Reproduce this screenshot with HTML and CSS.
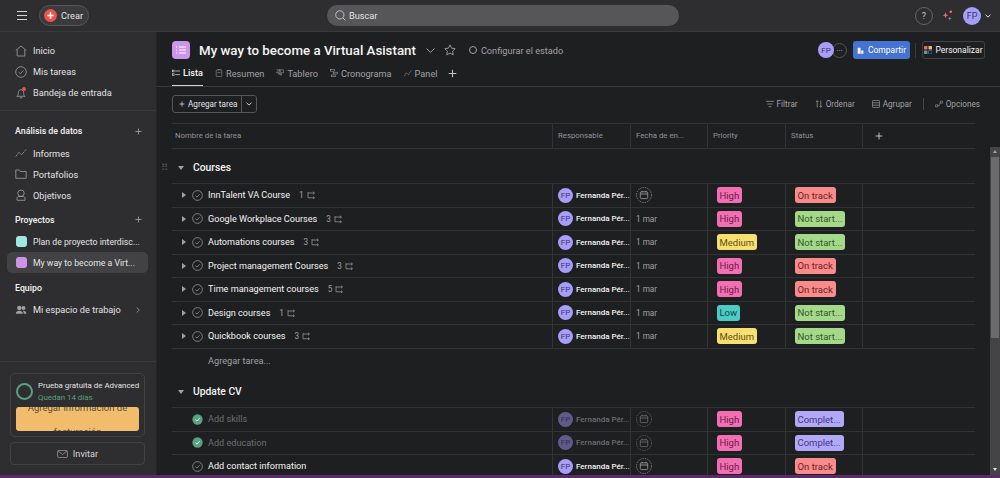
FILE: index.html
```html
<!DOCTYPE html>
<html>
<head>
  <title>My way to become a Virtual Asistant</title>
  <link rel="stylesheet" href="styles.css">
</head>
<body>
  <!-- shared icons -->
  <svg class="defs" width="0" height="0">
    <symbol id="i-check" viewBox="0 0 12 12"><circle cx="6" cy="6" r="5.3" fill="none" stroke="currentColor" stroke-width=".8"/><path d="M3.8 6.2l1.6 1.5 2.9-3.1" fill="none" stroke="currentColor" stroke-width=".8"/></symbol>
    <symbol id="i-done" viewBox="0 0 12 12"><circle cx="6" cy="6" r="5.6" fill="#58a182"/><path d="M3.8 6.2l1.6 1.5 2.9-3.1" fill="none" stroke="#fff" stroke-width="1"/></symbol>
    <symbol id="i-sub" viewBox="0 0 12 10"><path d="M1 1.5v7h8M1 2.5h8M7.2 .8l1.8 1.700-1.800 1.700M7.2 6.800l1.800 1.700-1.800 1.700" fill="none" stroke="currentColor" stroke-width=".9"/></symbol>
    <symbol id="i-cal" viewBox="0 0 16 16"><circle cx="8" cy="8" r="7.5" fill="none" stroke="currentColor" stroke-width=".7" stroke-dasharray="1.4 1"/><rect x="4.3" y="4.8" width="7.4" height="6.8" rx="1" fill="none" stroke="currentColor" stroke-width=".8"/><path d="M4.3 7h7.4M6 3.8v1.5M10 3.8v1.5" stroke="currentColor" stroke-width=".8"/></symbol>
    <symbol id="i-plus" viewBox="0 0 10 10"><path d="M5 .8v8.4M.8 5h8.4" stroke="currentColor" stroke-width="1.2"/></symbol>
  </svg>

  <header class="topbar">
    <svg class="menu-icon" viewBox="0 0 10 9"><path d="M0 .5h10M0 4.5h10M0 8.5h10" stroke="#d5d4d5" stroke-width="1"/></svg>
    <button class="create"><span class="create-dot"><svg viewBox="0 0 10 10"><path d="M5 1.5v7M1.5 5h7" stroke="#fff" stroke-width="1.8"/></svg></span>Crear</button>
    <div class="search">
      <svg viewBox="0 0 12 12"><circle cx="5.3" cy="5.3" r="4.5" fill="none" stroke="#d5d4d5" stroke-width=".9"/><path d="M8.6 8.6l2.8 2.8" stroke="#d5d4d5" stroke-width=".9"/></svg>
      Buscar
    </div>
    <div class="top-right">
      <span class="help">?</span>
      <svg class="sparkle" viewBox="0 0 11 11"><path d="M3.5 2.3l.8 2.2 2.2.8-2.2.8-.8 2.2-.8-2.2-2.2-.8 2.2-.8z" fill="#f06a6a"/><circle cx="8.8" cy="1.7" r="1.3" fill="#f06a6a"/><path d="M7.8 6.8l.5 1.3 1.3.5-1.3.5-.5 1.3-.5-1.3-1.3-.5 1.3-.5z" fill="#7a8ff0"/></svg>
      <span class="avatar avatar-top">FP</span>
      <svg class="top-chevron" viewBox="0 0 6 4"><path d="M.5.7l2.5 2.4 2.5-2.4" fill="none" stroke="#e3e2e3" stroke-width="1"/></svg>
    </div>
  </header>

  <div class="app">
    <aside class="sidebar">
      <nav class="nav-group nav-main">
        <a class="nav-item"><svg viewBox="0 0 12 12"><path d="M.8 5.4L6 1l5.200 4.400M2.200 4.500v6.500h7.600V4.500" fill="none" stroke="currentColor" stroke-width=".8"/></svg>Inicio</a>
        <a class="nav-item"><svg><use href="#i-check"/></svg>Mis tareas</a>
        <a class="nav-item"><svg viewBox="0 0 12 12"><path d="M1.5 9.3h9M2.5 9.3c.8-1 .8-2.200.8-3.500 0-1.800 1.100-3.200 2.700-3.200s2.700 1.400 2.700 3.200c0 1.300 0 2.500.8 3.500M4.800 10.800h2.400" fill="none" stroke="currentColor" stroke-width=".8"/><circle cx="9" cy="2" r="1.9" fill="#f0524c"/></svg>Bandeja de entrada</a>
      </nav>

      <div class="nav-title">Análisis de datos<svg><use href="#i-plus"/></svg></div>
      <nav class="nav-group">
        <a class="nav-item"><svg viewBox="0 0 12 12"><path d="M.8 9.5L4 5.2l2.500 2.600L11 2.500" fill="none" stroke="currentColor" stroke-width=".8" stroke-dasharray="2.6 .8"/></svg>Informes</a>
        <a class="nav-item"><svg viewBox="0 0 12 12"><path d="M.8 2h3.500l1 1.500h5.900v6.800H.8z" fill="none" stroke="currentColor" stroke-width=".8"/></svg>Portafolios</a>
        <a class="nav-item"><svg viewBox="0 0 12 12"><circle cx="6" cy="4.2" r="3.2" fill="none" stroke="currentColor" stroke-width=".8"/><path d="M2 11.3V9.500c0-1.200.8-2 2-2h4c1.200 0 2 .8 2 2v1.800z" fill="none" stroke="currentColor" stroke-width=".8"/></svg>Objetivos</a>
      </nav>

      <div class="nav-title">Proyectos<svg><use href="#i-plus"/></svg></div>
      <nav class="nav-group">
        <a class="nav-item"><span class="swatch swatch-teal"></span><span class="nav-text">Plan de proyecto interdisc...</span></a>
        <a class="nav-item nav-active"><span class="swatch swatch-purple"></span><span class="nav-text">My way to become a Virt...</span></a>
      </nav>

      <div class="nav-title nav-title-team">Equipo</div>
      <nav class="nav-group">
        <a class="nav-item"><svg viewBox="0 0 12 12"><circle cx="4.3" cy="4" r="2.2" fill="currentColor"/><circle cx="8.5" cy="4" r="2" fill="currentColor"/><path d="M.8 9.8c0-2 1.500-3 3.500-3s3.500 1 3.500 3zM8.700 9.800c0-1.300-.4-2.200-1-3 1.900-.3 3.700.7 3.700 3z" fill="currentColor"/></svg>Mi espacio de trabajo<svg class="nav-chevron" viewBox="0 0 4 6"><path d="M.7.5L3.3 3 .7 5.5" fill="none" stroke="currentColor" stroke-width=".8"/></svg></a>
      </nav>

      <div class="sidebar-bottom">
        <div class="trial">
          <div class="trial-head">
            <span class="trial-ring"></span>
            <div>
              <div class="trial-name">Prueba gratuita de Advanced</div>
              <div class="trial-days">Quedan 14 días</div>
            </div>
          </div>
          <div class="trial-cta"><span>Agregar información de</span><span>facturación</span></div>
        </div>
        <button class="invite"><svg viewBox="0 0 12 9"><rect x=".5" y=".5" width="11" height="8" rx="1.2" fill="none" stroke="currentColor" stroke-width=".8"/><path d="M.8 1l5.200 4 5.200-4" fill="none" stroke="currentColor" stroke-width=".8"/></svg>Invitar</button>
      </div>
    </aside>

    <main class="main">
      <div class="project-head">
        <div class="title-row">
          <span class="project-icon"><svg viewBox="0 0 10 8"><path d="M3 1h7M3 4h7M3 7h7M0 1h1.200M0 4h1.200M0 7h1.200" stroke="#fff" stroke-width="1"/></svg></span>
          <h1>My way to become a Virtual Asistant</h1>
          <svg class="title-chevron" viewBox="0 0 9 5"><path d="M.5.5L4.5 4.3 8.5.5" fill="none" stroke="#a2a0a2" stroke-width="1"/></svg>
          <svg class="title-star" viewBox="0 0 12 12"><path d="M6 .9l1.600 3.300 3.600.5-2.600 2.500.6 3.600L6 9.100l-3.200 1.700.6-3.600L.8 4.700l3.600-.5z" fill="none" stroke="#a2a0a2" stroke-width=".9"/></svg>
          <span class="status-link"><span class="status-ring"></span>Configurar el estado</span>
          <div class="head-actions">
            <span class="avatar avatar-head">FP</span>
            <span class="more-dots">···</span>
            <button class="share"><svg viewBox="0 0 10 10"><path d="M1 9.5V1h4v8.500zM6 9.500V5h3v4.500z" fill="#fff"/></svg>Compartir</button>
            <span class="head-divider"></span>
            <button class="customize"><svg viewBox="0 0 10 10"><rect width="4.3" height="4.3" rx=".6" fill="#f06a6a"/><rect x="5.7" width="4.3" height="4.3" rx=".6" fill="#f1bd6c"/><rect y="5.7" width="4.3" height="4.3" rx=".6" fill="#5da283"/><rect x="5.7" y="5.7" width="4.3" height="4.3" rx=".6" fill="none" stroke="#4573d2"/></svg>Personalizar</button>
          </div>
        </div>
        <div class="tabs">
          <a class="tab tab-active"><svg viewBox="0 0 10 8"><rect x=".4" y=".4" width="2.2" height="2.2" fill="none" stroke="currentColor" stroke-width=".7"/><rect x=".4" y="5" width="2.2" height="2.2" fill="none" stroke="currentColor" stroke-width=".7"/><path d="M4 1.5h6M4 6h6" stroke="currentColor" stroke-width=".8"/></svg>Lista</a>
          <a class="tab"><svg viewBox="0 0 8 10"><rect x=".5" y="1.2" width="7" height="8.3" rx="1" fill="none" stroke="currentColor" stroke-width=".7"/><path d="M2.5 1.2V.4h3v.8M2 4.5h4" stroke="currentColor" stroke-width=".7" fill="none"/></svg>Resumen</a>
          <a class="tab"><svg viewBox="0 0 10 9"><path d="M.5.5h9V4H6.800v3h-1.600V.5M4.800.5V6H3.200V4H.5z" fill="none" stroke="currentColor" stroke-width=".7"/></svg>Tablero</a>
          <a class="tab"><svg viewBox="0 0 10 10"><rect x=".5" y=".5" width="5" height="2.2" fill="none" stroke="currentColor" stroke-width=".7"/><rect x="4" y="4" width="5.5" height="2.2" fill="none" stroke="currentColor" stroke-width=".7"/><rect x="2" y="7.5" width="5" height="2.2" fill="none" stroke="currentColor" stroke-width=".7"/></svg>Cronograma</a>
          <a class="tab"><svg viewBox="0 0 10 10"><path d="M.5 9L3 4.5 5.5 7l4-6" fill="none" stroke="currentColor" stroke-width=".8" stroke-dasharray="2 .6"/></svg>Panel</a>
          <svg class="tab-add"><use href="#i-plus"/></svg>
        </div>
      </div>

      <div class="body-wrap">
        <div class="content">
          <div class="toolbar">
            <div class="add-task">
              <span class="add-task-main"><svg><use href="#i-plus"/></svg>Agregar tarea</span>
              <span class="add-task-more"><svg viewBox="0 0 6 4"><path d="M.5.7l2.500 2.400 2.500-2.400" fill="none" stroke="currentColor" stroke-width=".9"/></svg></span>
            </div>
            <div class="tools">
              <span class="tool"><svg viewBox="0 0 9 7"><path d="M0 .5h9M1.500 3.500h6M3 6.500h3" stroke="currentColor" stroke-width=".8"/></svg>Filtrar</span>
              <span class="tool"><svg viewBox="0 0 8 9"><path d="M2 8.5V.8M.5 2.3L2 .8l1.500 1.500M6 .5v7.700M4.500 6.700L6 8.200l1.500-1.500" fill="none" stroke="currentColor" stroke-width=".8"/></svg>Ordenar</span>
              <span class="tool"><svg viewBox="0 0 8 8"><rect x=".4" y=".4" width="7.2" height="7.2" rx="1" fill="none" stroke="currentColor" stroke-width=".7"/><path d="M.4 2.8h7.200M.4 5.200h7.200" stroke="currentColor" stroke-width=".7"/></svg>Agrupar</span>
              <span class="tool-divider"></span>
              <span class="tool"><svg viewBox="0 0 10 8"><path d="M.5 7.5V5h3v2.500zM6.500 3V.5h3V3zM3.500 6H5c1 0 1-4 2-4" fill="none" stroke="currentColor" stroke-width=".7"/></svg>Opciones</span>
            </div>
          </div>

          <div class="table">
            <div class="row row-head">
              <div class="cell cell-task">Nombre de la tarea</div>
              <div class="cell">Responsable</div>
              <div class="cell">Fecha de en...</div>
              <div class="cell">Priority</div>
              <div class="cell">Status</div>
              <div class="cell cell-plain"><svg class="col-add"><use href="#i-plus"/></svg></div>
            </div>

            <div class="section">
              <span class="drag">⠿</span><span class="caret-down"></span>Courses
            </div>

            <div class="row">
              <div class="cell cell-task"><span class="caret"></span><svg class="check"><use href="#i-check"/></svg><span class="task-name">InnTalent VA Course</span><span class="subs">1<svg><use href="#i-sub"/></svg></span></div>
              <div class="cell"><span class="avatar">FP</span><span class="person">Fernanda Pér...</span></div>
              <div class="cell"><svg class="cal"><use href="#i-cal"/></svg></div>
              <div class="cell cell-pill"><span class="pill pill-high">High</span></div>
              <div class="cell cell-pill"><span class="pill pill-track">On track</span></div>
              <div class="cell cell-plain"></div>
            </div>
            <div class="row">
              <div class="cell cell-task"><span class="caret"></span><svg class="check"><use href="#i-check"/></svg><span class="task-name">Google Workplace Courses</span><span class="subs">3<svg><use href="#i-sub"/></svg></span></div>
              <div class="cell"><span class="avatar">FP</span><span class="person">Fernanda Pér...</span></div>
              <div class="cell"><span class="date">1 mar</span></div>
              <div class="cell cell-pill"><span class="pill pill-high">High</span></div>
              <div class="cell cell-pill"><span class="pill pill-not">Not start...</span></div>
              <div class="cell cell-plain"></div>
            </div>
            <div class="row">
              <div class="cell cell-task"><span class="caret"></span><svg class="check"><use href="#i-check"/></svg><span class="task-name">Automations courses</span><span class="subs">3<svg><use href="#i-sub"/></svg></span></div>
              <div class="cell"><span class="avatar">FP</span><span class="person">Fernanda Pér...</span></div>
              <div class="cell"><span class="date">1 mar</span></div>
              <div class="cell cell-pill"><span class="pill pill-medium">Medium</span></div>
              <div class="cell cell-pill"><span class="pill pill-not">Not start...</span></div>
              <div class="cell cell-plain"></div>
            </div>
            <div class="row">
              <div class="cell cell-task"><span class="caret"></span><svg class="check"><use href="#i-check"/></svg><span class="task-name">Project management Courses</span><span class="subs">3<svg><use href="#i-sub"/></svg></span></div>
              <div class="cell"><span class="avatar">FP</span><span class="person">Fernanda Pér...</span></div>
              <div class="cell"><span class="date">1 mar</span></div>
              <div class="cell cell-pill"><span class="pill pill-high">High</span></div>
              <div class="cell cell-pill"><span class="pill pill-track">On track</span></div>
              <div class="cell cell-plain"></div>
            </div>
            <div class="row">
              <div class="cell cell-task"><span class="caret"></span><svg class="check"><use href="#i-check"/></svg><span class="task-name">Time management courses</span><span class="subs">5<svg><use href="#i-sub"/></svg></span></div>
              <div class="cell"><span class="avatar">FP</span><span class="person">Fernanda Pér...</span></div>
              <div class="cell"><span class="date">1 mar</span></div>
              <div class="cell cell-pill"><span class="pill pill-high">High</span></div>
              <div class="cell cell-pill"><span class="pill pill-track">On track</span></div>
              <div class="cell cell-plain"></div>
            </div>
            <div class="row">
              <div class="cell cell-task"><span class="caret"></span><svg class="check"><use href="#i-check"/></svg><span class="task-name">Design courses</span><span class="subs">1<svg><use href="#i-sub"/></svg></span></div>
              <div class="cell"><span class="avatar">FP</span><span class="person">Fernanda Pér...</span></div>
              <div class="cell"><span class="date">1 mar</span></div>
              <div class="cell cell-pill"><span class="pill pill-low">Low</span></div>
              <div class="cell cell-pill"><span class="pill pill-not">Not start...</span></div>
              <div class="cell cell-plain"></div>
            </div>
            <div class="row">
              <div class="cell cell-task"><span class="caret"></span><svg class="check"><use href="#i-check"/></svg><span class="task-name">Quickbook courses</span><span class="subs">3<svg><use href="#i-sub"/></svg></span></div>
              <div class="cell"><span class="avatar">FP</span><span class="person">Fernanda Pér...</span></div>
              <div class="cell"><span class="date">1 mar</span></div>
              <div class="cell cell-pill"><span class="pill pill-medium">Medium</span></div>
              <div class="cell cell-pill"><span class="pill pill-not">Not start...</span></div>
              <div class="cell cell-plain"></div>
            </div>

            <div class="add-row">Agregar tarea...</div>

            <div class="section">
              <span class="caret-down"></span>Update CV
            </div>

            <div class="row row-done">
              <div class="cell cell-task cell-leaf"><svg class="check"><use href="#i-done"/></svg><span class="task-name">Add skills</span></div>
              <div class="cell"><span class="avatar">FP</span><span class="person">Fernanda Pér...</span></div>
              <div class="cell"><svg class="cal"><use href="#i-cal"/></svg></div>
              <div class="cell cell-pill"><span class="pill pill-high">High</span></div>
              <div class="cell cell-pill"><span class="pill pill-complete">Complet...</span></div>
              <div class="cell cell-plain"></div>
            </div>
            <div class="row row-done">
              <div class="cell cell-task cell-leaf"><svg class="check"><use href="#i-done"/></svg><span class="task-name">Add education</span></div>
              <div class="cell"><span class="avatar">FP</span><span class="person">Fernanda Pér...</span></div>
              <div class="cell"><svg class="cal"><use href="#i-cal"/></svg></div>
              <div class="cell cell-pill"><span class="pill pill-high">High</span></div>
              <div class="cell cell-pill"><span class="pill pill-complete">Complet...</span></div>
              <div class="cell cell-plain"></div>
            </div>
            <div class="row">
              <div class="cell cell-task cell-leaf"><svg class="check"><use href="#i-check"/></svg><span class="task-name">Add contact information</span></div>
              <div class="cell"><span class="avatar">FP</span><span class="person">Fernanda Pér...</span></div>
              <div class="cell"><svg class="cal"><use href="#i-cal"/></svg></div>
              <div class="cell cell-pill"><span class="pill pill-high">High</span></div>
              <div class="cell cell-pill"><span class="pill pill-track">On track</span></div>
              <div class="cell cell-plain"></div>
            </div>
          </div>
        </div>

        <div class="scrollbar">
          <span class="scroll-up"></span>
          <span class="scroll-thumb"></span>
          <span class="scroll-down"></span>
        </div>
      </div>
    </main>
  </div>

  <div class="taskbar"></div>
</body>
</html>
```

FILE: styles.css
```css
* {
  box-sizing: border-box;
}
html, body {
  height: 100%;
}
body {
  margin: 0;
  display: flex;
  flex-direction: column;
  overflow: hidden;
  background: #1e1f21;
  color: #f5f4f3;
  font-family: Roboto, "Noto Sans", sans-serif;
  font-size: 9.2px;
}
button {
  font-family: inherit;
  cursor: pointer;
}
svg {
  display: block;
  flex-shrink: 0;
}
.defs {
  position: absolute;
}

/* top bar */
.topbar {
  height: 32px;
  flex-shrink: 0;
  display: flex;
  align-items: center;
  padding: 0 9px 0 17px;
  background: #2e2e30;
  border-bottom: 1px solid #3a3a3c;
}
.menu-icon {
  width: 10px;
  height: 9px;
}
.create {
  margin-left: 12px;
  width: 50px;
  height: 21px;
  display: flex;
  align-items: center;
  gap: 4px;
  padding: 0 0 0 4px;
  border: 1px solid #565557;
  border-radius: 11px;
  background: #3b3b3d;
  color: #e3e2e3;
  font-size: 9.2px;
}
.create-dot {
  width: 13px;
  height: 13px;
  padding: 2px;
  border-radius: 50%;
  background: #f0524c;
}
.search {
  margin-left: 238px;
  width: 352px;
  height: 21px;
  display: flex;
  align-items: center;
  gap: 3px;
  padding-left: 8px;
  border-radius: 11px;
  background: #565557;
  color: #e3e2e3;
}
.search svg {
  width: 11px;
  height: 11px;
}
.top-right {
  margin-left: auto;
  display: flex;
  align-items: center;
}
.help {
  width: 18px;
  height: 18px;
  display: flex;
  align-items: center;
  justify-content: center;
  border: 1px solid #656466;
  border-radius: 50%;
  color: #c4c3c4;
  font-size: 9px;
}
.sparkle {
  margin-left: 9px;
  width: 11px;
  height: 11px;
}
.top-chevron {
  margin-left: 4px;
  width: 6px;
  height: 4px;
}

/* avatars */
.avatar {
  width: 15px;
  height: 15px;
  flex-shrink: 0;
  display: flex;
  align-items: center;
  justify-content: center;
  border-radius: 50%;
  background: #a79dfb;
  color: #3b3566;
  font-size: 8px;
}
.avatar-top {
  margin-left: 10px;
  width: 18px;
  height: 18px;
  font-size: 9px;
}
.avatar-head {
  position: relative;
  z-index: 1;
  width: 16px;
  height: 16px;
}

/* sidebar */
.app {
  flex: 1;
  min-height: 0;
  display: flex;
}
.sidebar {
  width: 157px;
  flex-shrink: 0;
  display: flex;
  flex-direction: column;
  padding-top: 8px;
  background: #2e2e30;
  border-right: 1px solid #252527;
}
.nav-group {
  padding: 0 8px 0 7px;
}
.nav-main {
  padding-bottom: 7px;
  margin-bottom: 6px;
  border-bottom: 1px solid #39393b;
}
.nav-item {
  height: 21px;
  display: flex;
  align-items: center;
  gap: 6px;
  padding: 0 3px 0 8px;
  border-radius: 5px;
  color: #e3e2e3;
  white-space: nowrap;
}
.nav-item > svg {
  width: 12px;
  height: 12px;
  color: #a2a0a2;
}
.nav-item .nav-chevron {
  width: 4px;
  height: 6px;
  margin: 0 5px 0 auto;
}
.nav-text {
  font-size: 8.7px;
}
.nav-active {
  background: #424244;
}
.nav-title {
  height: 21px;
  margin: 3.5px 0 1px;
  display: flex;
  align-items: center;
  justify-content: space-between;
  padding: 0 14px 0 15px;
  color: #f5f4f3;
  font-size: 8.8px;
  font-weight: 500;
}
.nav-title svg {
  width: 7px;
  height: 7px;
  color: #a2a0a2;
}
.nav-title-team {
  margin-top: 4px;
}
.swatch {
  width: 11px;
  height: 11px;
  margin-left: 1px;
  flex-shrink: 0;
  border-radius: 3px;
}
.swatch-teal {
  background: #9ee7e3;
}
.swatch-purple {
  background: #cd95ea;
}
.sidebar-bottom {
  margin-top: auto;
  padding: 11px 11px 10px 10px;
  border-top: 1px solid #39393b;
}
.trial {
  height: 64px;
  padding: 6px 5px 0;
  border: 1px solid #424244;
  border-radius: 5px;
}
.trial-head {
  display: flex;
  gap: 5px;
  height: 27px;
}
.trial-ring {
  width: 17px;
  height: 17px;
  margin-top: 3px;
  flex-shrink: 0;
  border: 2.5px solid #58a182;
  border-radius: 50%;
}
.trial-name {
  color: #e3e2e3;
  font-size: 7.9px;
  line-height: 12px;
  white-space: nowrap;
}
.trial-days {
  color: #58a182;
  font-size: 7.9px;
  line-height: 12px;
}
.trial-cta {
  height: 24px;
  overflow: hidden;
  padding: 0 4px;
  border-radius: 3px;
  background: #f1bd6c;
  color: #5a4f3a;
  font-size: 9.5px;
  line-height: 24px;
  text-align: center;
}
.trial-cta span {
  display: block;
  margin-top: -11px;
}
.trial-cta span + span {
  margin-top: 0;
}
.invite {
  margin-top: 5px;
  width: 100%;
  height: 23px;
  display: flex;
  align-items: center;
  justify-content: center;
  gap: 5px;
  border: 1px solid #424244;
  border-radius: 4px;
  background: transparent;
  color: #d5d4d5;
  font-size: 9.2px;
}
.invite svg {
  width: 11px;
  height: 8px;
  color: #a2a0a2;
}

/* project header */
.main {
  flex: 1;
  min-width: 0;
  display: flex;
  flex-direction: column;
}
.project-head {
  height: 55px;
  flex-shrink: 0;
  padding: 0 15px;
  border-bottom: 1px solid #39393b;
}
.title-row {
  height: 34px;
  padding-top: 2px;
  display: flex;
  align-items: center;
}
.project-icon {
  width: 18px;
  height: 18px;
  padding: 5px 4px;
  border-radius: 4px;
  background: #cd95ea;
}
h1 {
  margin: 0 0 0 9px;
  color: #f5f4f3;
  font-size: 13.3px;
  font-weight: 500;
  white-space: nowrap;
}
.title-chevron {
  margin-left: 10px;
  width: 9px;
  height: 5px;
}
.title-star {
  margin-left: 9px;
  width: 12px;
  height: 12px;
}
.status-link {
  margin-left: 13px;
  display: flex;
  align-items: center;
  gap: 4px;
  color: #a2a0a2;
}
.status-ring {
  width: 8px;
  height: 8px;
  border: 1px solid #a2a0a2;
  border-radius: 50%;
}
.head-actions {
  margin-left: auto;
  display: flex;
  align-items: center;
}
.more-dots {
  width: 15px;
  height: 15px;
  margin-left: -2px;
  display: flex;
  align-items: center;
  justify-content: center;
  border: 1px solid #565557;
  border-radius: 50%;
  color: #c4c3c4;
  font-size: 8px;
}
.share {
  margin-left: 6px;
  width: 57px;
  height: 18px;
  display: flex;
  align-items: center;
  justify-content: center;
  gap: 4px;
  padding: 0;
  border: none;
  border-radius: 3px;
  background: #4573d2;
  color: #fff;
  font-size: 8.5px;
}
.share svg {
  width: 7px;
  height: 7px;
}
.head-divider {
  margin: 0 6px 0 5px;
  width: 1px;
  height: 15px;
  background: #39393b;
}
.customize {
  width: 63px;
  height: 18px;
  display: flex;
  align-items: center;
  justify-content: center;
  gap: 3px;
  padding: 0;
  border: 1px solid #424244;
  border-radius: 3px;
  background: transparent;
  color: #f5f4f3;
  font-size: 8.5px;
}
.customize svg {
  width: 8px;
  height: 8px;
}
.tabs {
  display: flex;
  align-items: flex-start;
  gap: 12px;
}
.tab {
  height: 20px;
  display: flex;
  align-items: center;
  gap: 3px;
  padding-bottom: 6px;
  color: #a2a0a2;
}
.tab svg {
  width: 8px;
  height: 8px;
}
.tab-active {
  color: #f5f4f3;
  font-weight: 500;
  border-bottom: 1px solid #d5d4d5;
}
.tab-add {
  margin: 3px 0 0 -2px;
  width: 9px;
  height: 9px;
  color: #c4c3c4;
}

/* list */
.body-wrap {
  flex: 1;
  min-height: 0;
  display: flex;
}
.content {
  flex: 1;
  min-width: 0;
  overflow: hidden;
}
.toolbar {
  height: 36px;
  display: flex;
  align-items: center;
  justify-content: space-between;
  padding: 0 10px 2px 15px;
}
.add-task {
  height: 18px;
  display: flex;
  border: 1px solid #565557;
  border-radius: 3px;
  color: #e3e2e3;
  font-size: 8.2px;
  white-space: nowrap;
}
.add-task-main {
  width: 69px;
  display: flex;
  align-items: center;
  gap: 3px;
  padding-left: 6px;
  border-right: 1px solid #565557;
}
.add-task-main svg {
  width: 6px;
  height: 6px;
}
.add-task-more {
  width: 14px;
  display: flex;
  align-items: center;
  justify-content: center;
}
.add-task-more svg {
  width: 6px;
  height: 4px;
}
.tools {
  display: flex;
  align-items: center;
  gap: 17px;
  color: #a2a0a2;
  font-size: 8.2px;
}
.tool {
  display: flex;
  align-items: center;
  gap: 3px;
}
.tool svg {
  width: 8px;
  height: 8px;
}
.tool-divider {
  margin: 0 -6px;
  width: 1px;
  height: 12px;
  background: #424244;
}
.table {
  margin-left: 15px;
  width: 803px;
  border-top: 1px solid #333335;
}
.row {
  height: 23.5px;
  display: grid;
  grid-template-columns: 381px 78px 77px 78px 77px 112px;
  border-bottom: 1px solid #333335;
  font-size: 9.1px;
}
.row-head {
  height: 24.5px;
  color: #949395;
  font-size: 7.8px;
}
.cell {
  display: flex;
  align-items: center;
  min-width: 0;
  padding-left: 5px;
  border-right: 1px solid #333335;
}
.cell-task {
  padding-left: 3px;
}
.cell-leaf {
  padding-left: 20px;
}
.cell-pill {
  padding-left: 8.5px;
}
.cell-plain {
  border-right: none;
}
.col-add {
  margin-left: 7px;
  width: 8px;
  height: 8px;
  color: #c4c3c4;
}
.section {
  height: 35.5px;
  display: flex;
  align-items: center;
  position: relative;
  padding: 4px 0 0 6px;
  border-bottom: 1px solid #333335;
  color: #f5f4f3;
  font-size: 10.3px;
  font-weight: 500;
}
.drag {
  position: absolute;
  left: -11px;
  color: #565557;
  font-size: 10px;
  font-weight: 400;
}
.caret-down {
  margin-right: 9px;
  width: 0;
  height: 0;
  border-left: 3.5px solid transparent;
  border-right: 3.5px solid transparent;
  border-top: 4px solid #a2a0a2;
}
.caret {
  margin: 0 6px 0 7px;
  width: 0;
  height: 0;
  border-top: 3.5px solid transparent;
  border-bottom: 3.5px solid transparent;
  border-left: 4px solid #a2a0a2;
}
.check {
  width: 11px;
  height: 11px;
  color: #a2a0a2;
}
.task-name {
  margin-left: 5px;
  color: #f5f4f3;
  white-space: nowrap;
}
.subs {
  margin-left: 9px;
  display: flex;
  align-items: center;
  gap: 3px;
  color: #a2a0a2;
  font-size: 8.2px;
}
.subs svg {
  width: 10px;
  height: 8px;
}
.person {
  margin-left: 3px;
  color: #f5f4f3;
  font-size: 8px;
  font-weight: 500;
  white-space: nowrap;
}
.cal {
  width: 16px;
  height: 16px;
  color: #a2a0a2;
}
.date {
  color: #a2a0a2;
  font-size: 8.2px;
}
.pill {
  height: 16px;
  display: inline-flex;
  align-items: center;
  padding: 0 3px;
  border-radius: 3px;
  font-size: 9.5px;
  white-space: nowrap;
}
.pill-high {
  background: #f26fb2;
  color: #6d1a4b;
}
.pill-medium {
  background: #f8df72;
  color: #5c4f14;
}
.pill-low {
  background: #4ecbc4;
  color: #0d4a47;
}
.pill-track {
  background: #f98b8b;
  color: #6f2127;
}
.pill-not {
  background: #a5d98a;
  color: #35562a;
}
.pill-complete {
  background: #b3a7f8;
  color: #3f3784;
}
.row-done .task-name,
.row-done .person,
.row-done .cal {
  color: #6d6e6f;
}
.row-done .avatar {
  background: #5f5a8a;
  color: #322e4e;
}
.add-row {
  height: 24px;
  display: flex;
  align-items: center;
  padding-left: 36px;
  color: #a2a0a2;
}

/* scrollbar */
.scrollbar {
  width: 10px;
  margin-top: 60px;
  flex-shrink: 0;
  display: flex;
  flex-direction: column;
  background: #444446;
}
.scroll-up,
.scroll-down {
  height: 10px;
  flex-shrink: 0;
  position: relative;
}
.scroll-up::after,
.scroll-down::after {
  content: "";
  position: absolute;
  left: 2.5px;
  top: 3px;
  border-left: 2.5px solid transparent;
  border-right: 2.5px solid transparent;
}
.scroll-up::after {
  border-bottom: 3px solid #a2a0a2;
}
.scroll-down::after {
  border-top: 3px solid #e3e2e3;
}
.scroll-thumb {
  height: 181px;
  margin: 0 1px;
  background: #6b6b6c;
}
.scroll-down {
  margin-top: auto;
}

.taskbar {
  height: 3px;
  flex-shrink: 0;
  background: #5d2a6e;
}
```
